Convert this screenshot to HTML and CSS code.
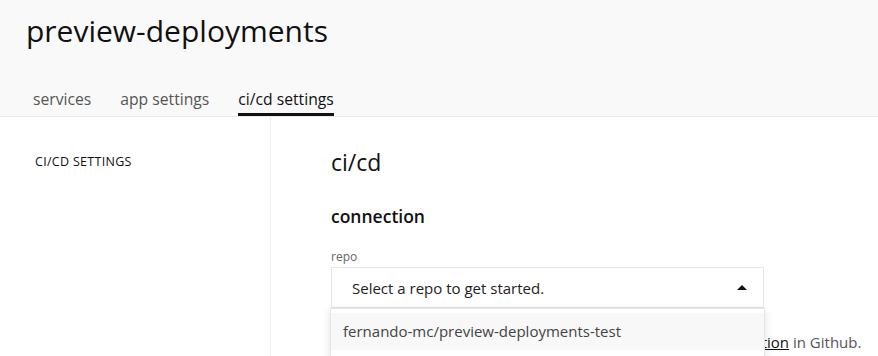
FILE: index.html
```html
<!DOCTYPE html>
<html>
<head>
    <title>preview-deployments</title>
    <meta charset="UTF-8">
    <link rel="stylesheet" href="styles.css">
</head>
<body>
    <header class="top">
        <h1 class="app-title">preview-deployments</h1>
        <nav class="tabs">
            <a class="tab">services</a>
            <a class="tab">app settings</a>
            <a class="tab active">ci/cd settings</a>
        </nav>
    </header>

    <div class="layout">
        <aside class="sidebar">
            <div class="side-item">CI/CD SETTINGS</div>
        </aside>

        <main class="content">
            <h2 class="page-title">ci/cd</h2>
            <h3 class="section-title">connection</h3>

            <label class="field-label">repo</label>
            <div class="select-wrap">
                <div class="select-box">
                    <span>Select a repo to get started.</span>
                    <span class="caret"></span>
                </div>
                <!-- open dropdown sits over the help text -->
                <ul class="menu">
                    <li class="menu-item">fernando-mc/preview-deployments-test</li>
                </ul>
            </div>
            <p class="help">Can't find your repository? Check out your <a href="#">Github App installation</a> in Github.</p>
        </main>
    </div>
</body>
</html>
```

FILE: styles.css
```css
body { margin: 0; font-family: "Open Sans", "Noto Sans", sans-serif; color: #111; background: #fff; }

.top { background: #f9f9f9; border-bottom: 1px solid #e9e9e9; padding: 0 0 0 26px; }
.app-title { margin: 0; padding-top: 11px; font-size: 30px; font-weight: 400; line-height: 40px; }
.tabs { display: flex; gap: 29px; margin-top: 38px; padding-left: 7px; }
.tab { font-size: 15.7px; color: #555; padding-bottom: 4px; border-bottom: 3px solid transparent; line-height: 20px; }
.tab.active { color: #111; border-bottom-color: #111; }

.layout { display: flex; min-height: 240px; }
.sidebar { width: 271px; border-right: 1px solid #eee; padding: 37px 0 0 35px; box-sizing: border-box; }
.side-item { font-size: 12.5px; letter-spacing: 0.3px; line-height: 16px; }

.content { padding: 30px 0 0 60px; flex: 1; }
.page-title { margin: 0; font-size: 23px; font-weight: 400; line-height: 30px; }
.section-title { margin: 27px 0 0; font-size: 17.5px; font-weight: 600; line-height: 24px; }
.field-label { display: block; margin-top: 21px; font-size: 12px; color: #666; line-height: 16px; }

.select-wrap { position: relative; width: 433px; margin-top: 2px; }
.select-box { border: 1px solid #e6e6e6; height: 39px; display: flex; align-items: center; justify-content: space-between; padding: 0 16px 0 20px; font-size: 15px; color: #222; }
.caret { width: 0; height: 0; border-left: 5px solid transparent; border-right: 5px solid transparent; border-bottom: 5px solid #111; }

.menu { position: absolute; left: -1px; top: 41px; width: 433px; margin: 0; padding: 4px 0 20px; list-style: none; background: #fff; border: 1px solid #e6e6e6; box-shadow: 0 2px 8px rgba(0,0,0,0.12); }
.menu-item { background: #f8f8f8; padding: 8px 12px; font-size: 15px; color: #444; line-height: 21px; }

.help { margin: 24px 0 0; font-size: 15px; color: #555; white-space: nowrap; }
.help a { color: #111; }
```
